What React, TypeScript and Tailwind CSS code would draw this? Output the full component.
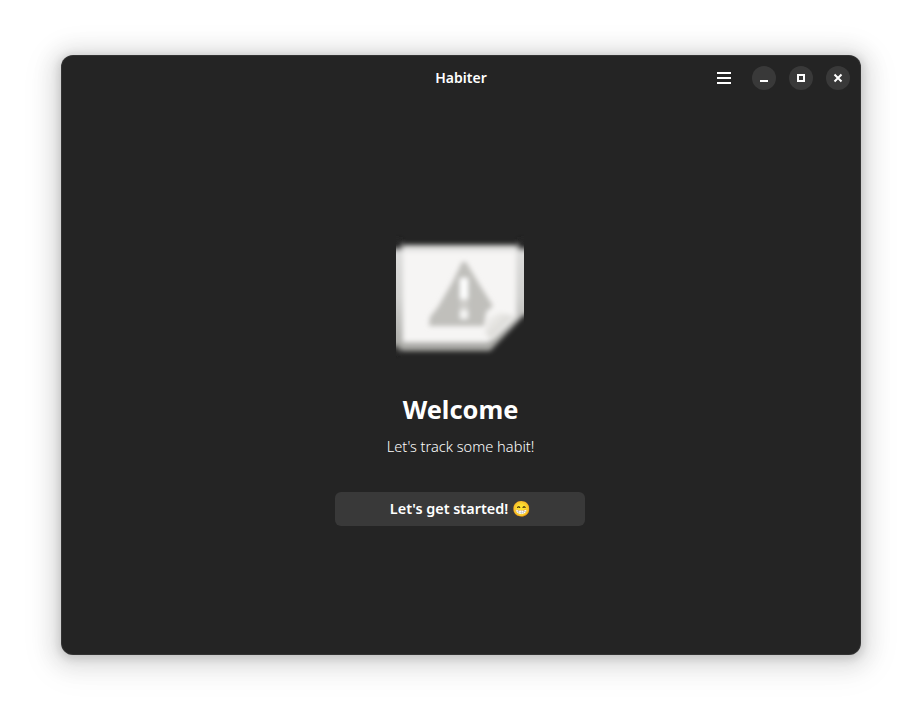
import React from "react";

function MissingImage() {
  return (
    <svg width="128" height="128" viewBox="0 -10 128 128" className="block overflow-hidden" aria-label="Missing image">
      <defs>
        <filter id="soft" x="-20%" y="-20%" width="140%" height="140%">
          <feGaussianBlur stdDeviation="2.6" />
        </filter>
        <linearGradient id="edge" x1="0" y1="0" x2="0" y2="1">
          <stop offset="0" stopColor="#dededd" />
          <stop offset="0.5" stopColor="#d0d0ce" />
          <stop offset="1" stopColor="#a6a6a2" />
        </linearGradient>
        <linearGradient id="curl" gradientUnits="userSpaceOnUse" x1="92" y1="74" x2="112" y2="94">
          <stop offset="0" stopColor="#f1f0ee" />
          <stop offset="1" stopColor="#cfceca" />
        </linearGradient>
        <clipPath id="frame">
          <rect x="0" y="-10" width="128" height="128" />
        </clipPath>
      </defs>
      <g clipPath="url(#frame)">
        <g filter="url(#soft)">
          <path d="M-10 8 L3 8 L8 3 H120 L125 8 H138 V73 H128 L94 109 H6 L3 106 H-10Z" fill="url(#edge)" />
          <path d="M7 9 H120 V74 L92 100 H7Z" fill="#f6f5f4" />
          <path d="M-4 -3 H6 V8 H-4Z M122 -3 H132 V8 H122Z M-4 103 H3 V112 H-4Z" fill="#242424" fillOpacity="0.8" />
        </g>
        <g filter="url(#soft)">
          <path d="M66 20 H70 L82 40 L97 64 L90 70 L88 84 H33 L34 75 L42 65 L57 39Z" fill="#c0bfbb" />
          <path d="M64 36 H72 V57 H64Z" fill="#ffffff" />
          <path d="M64 57 H72 V68 H64Z" fill="#ffffff" fillOpacity="0.25" />
          <path d="M64 68 H72 V77 H64Z" fill="#ffffff" fillOpacity="0.85" />
          <path d="M92 76 L104 71 L118 74 L96 97 L89 92Z" fill="url(#curl)" />
        </g>
      </g>
    </svg>
  );
}

export default function App() {
  return (
    <div className="flex h-[722px] w-[922px] items-start justify-center overflow-hidden bg-white pt-[55px] font-['Noto_Sans','Open_Sans',sans-serif] text-white">
      <main className="flex h-[600px] w-[800px] flex-col overflow-hidden rounded-xl bg-[#242424] shadow-[0_2px_8px_2px_rgba(0,0,0,0.13),0_3px_20px_10px_rgba(0,0,0,0.09),0_6px_32px_16px_rgba(0,0,0,0.04),inset_0_0_0_1px_rgba(255,255,255,0.07)]">
        <header className="grid h-[46px] shrink-0 grid-cols-[1fr_auto_1fr] items-center">
          <span />
          <h1 className="pb-[2px] text-[14px] font-semibold whitespace-nowrap">Habiter</h1>
          <div className="flex items-center justify-end gap-[13px] pr-[11px]">
            <button aria-label="Menu" className="mr-[8px]">
              <svg width="14" height="12" viewBox="0 0 14 12" className="block" fill="#fff">
                <path d="M0 0H14V2H0ZM0 5H14V7H0ZM0 10H14V12H0Z" />
              </svg>
            </button>
            <button aria-label="Minimize" className="size-6 rounded-full bg-[#393939]">
              <svg width="24" height="24" viewBox="0 0 24 24" fill="#fff">
                <path d="M8 14H16V16H8Z" />
              </svg>
            </button>
            <button aria-label="Maximize" className="size-6 rounded-full bg-[#393939]">
              <svg width="24" height="24" viewBox="0 0 24 24" fill="none" stroke="#fff" strokeWidth="2">
                <path d="M9 9H15V15H9Z" />
              </svg>
            </button>
            <button aria-label="Close" className="size-6 rounded-full bg-[#393939]">
              <svg width="24" height="24" viewBox="0 0 24 24" fill="none" stroke="#fff" strokeWidth="2">
                <path d="M8.5 8.5L15.5 15.5M15.5 8.5L8.5 15.5" />
              </svg>
            </button>
          </div>
        </header>
        <section className="flex flex-col items-center pt-[131px] pr-[2px]">
          <MissingImage />
          <h2 className="mt-[31px] h-9 pl-px text-[25.4px] leading-9 font-bold whitespace-nowrap">Welcome</h2>
          <p className="mt-[9px] h-5 pl-px text-[14.6px] leading-5 font-light whitespace-nowrap">Let's track some habit!</p>
          <button className="mt-[36px] flex h-[34px] w-[250px] items-center justify-center gap-1 rounded-md bg-[#393939] pl-px text-[14.4px] font-semibold whitespace-nowrap">
            <span>Let's get started!</span>
            <span className="pb-[2px] text-[15px] leading-none">😁</span>
          </button>
        </section>
      </main>
    </div>
  );
}
